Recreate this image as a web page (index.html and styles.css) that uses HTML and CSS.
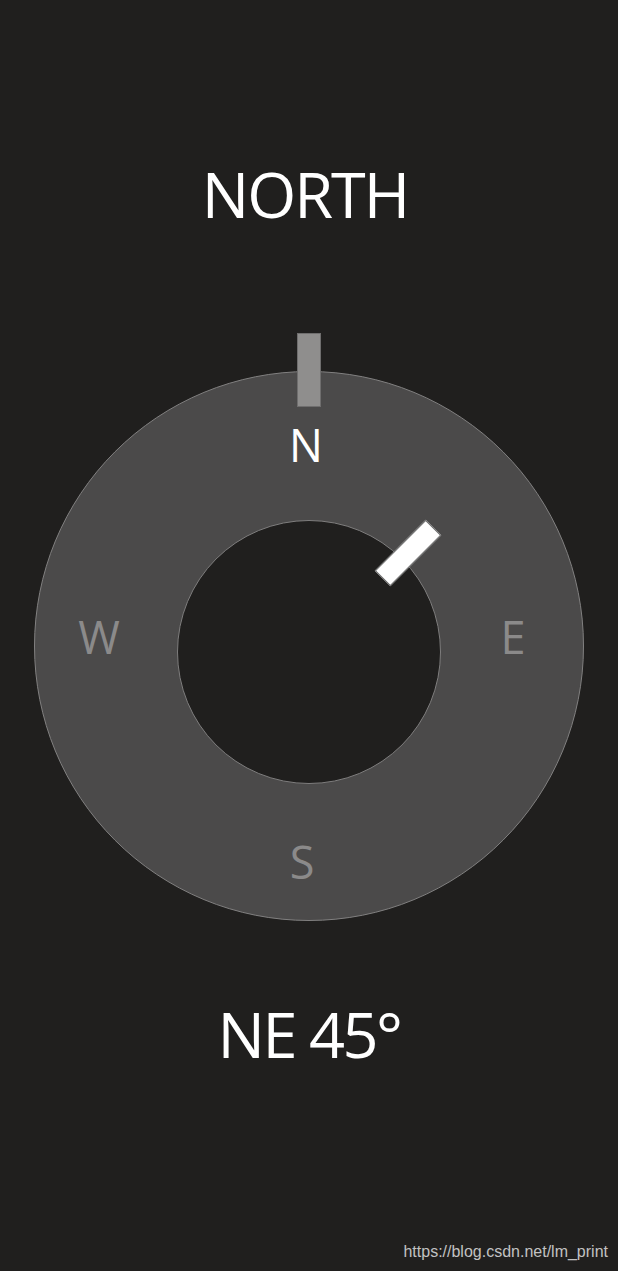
FILE: index.html
```html
<!DOCTYPE html>
<html lang="en">
<head>
<meta charset="utf-8">
<title>Compass</title>
<link rel="stylesheet" href="styles.css">
</head>
<body>
<main class="page">
  <h1 class="heading">NORTH</h1>
  <div class="compass">
    <div class="inner"></div>
    <div class="north-mark"></div>
    <div class="needle"></div>
    <span class="label label-n">N</span>
    <span class="label label-w">W</span>
    <span class="label label-e">E</span>
    <span class="label label-s">S</span>
  </div>
  <p class="reading">NE 45°</p>
</main>
<div class="watermark">https://blog.csdn.net/lm_print</div>
</body>
</html>
```
FILE: styles.css
```css
html, body {
  margin: 0;
  padding: 0;
  background: #201f1e;
}
body {
  width: 618px;
  height: 1271px;
  position: relative;
  overflow: hidden;
  font-family: "Open Sans", "Noto Sans", sans-serif;
}
.page {
  display: flex;
  flex-direction: column;
  align-items: center;
  padding-top: 162px;
}
.heading {
  margin: 0 8px 0 0;
  font-size: 63px;
  line-height: 64px;
  height: 64px;
  font-weight: 400;
  color: #ffffff;
  letter-spacing: -2px;
}
.compass {
  position: relative;
  margin-top: 145px;
  width: 550px;
  height: 550px;
  box-sizing: border-box;
  border-radius: 50%;
  background: #4b4a4a;
  border: 1px solid #818080;
}
.inner {
  position: absolute;
  left: 141.5px;
  top: 148px;
  width: 264px;
  height: 264px;
  box-sizing: border-box;
  border-radius: 50%;
  background: #201f1e;
  border: 1px solid #7e7d7d;
}
.north-mark {
  position: absolute;
  left: 262px;
  top: -39px;
  width: 24px;
  height: 74px;
  box-sizing: border-box;
  background: #8f8e8d;
  border: 1px solid #6f6e6e;
}
.needle {
  position: absolute;
  left: 337px;
  top: 170px;
  width: 72px;
  height: 22px;
  box-sizing: border-box;
  background: #ffffff;
  border: 1px solid #6a6a6a;
  transform: rotate(-45deg);
}
.label {
  position: absolute;
  width: 60px;
  text-align: center;
  font-size: 45px;
  line-height: 45px;
  color: #8b8a8a;
}
.label-n {
  left: 241px;
  top: 50px;
  color: #ffffff;
}
.label-w {
  left: 34px;
  top: 242px;
}
.label-e {
  left: 448px;
  top: 242px;
}
.label-s {
  left: 237px;
  top: 467px;
}
.reading {
  margin: 81px 0 0;
  font-size: 63px;
  line-height: 64px;
  height: 64px;
  color: #ffffff;
  letter-spacing: -2.5px;
}
.watermark {
  position: absolute;
  right: 10px;
  top: 1243px;
  font-family: "Liberation Sans", Arial, sans-serif;
  font-size: 16px;
  line-height: 18px;
  color: #c2c2c2;
}
```
